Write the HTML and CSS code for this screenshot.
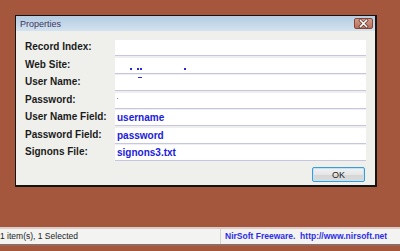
FILE: index.html
```html
<!DOCTYPE html>
<html>
<head>
<meta charset="utf-8">
<link rel="stylesheet" href="styles.css">
</head>
<body>
<div class="desktop">
  <div class="dialog">
    <div class="titlebar">
      <span class="title">Properties</span>
      <span class="close"><svg width="19" height="11" viewBox="0 0 19 11"><path d="M6.5 2.5 L12.5 8.5 M12.5 2.5 L6.5 8.5" stroke="#5a2a20" stroke-width="3" stroke-linecap="square"/><path d="M6.5 2.5 L12.5 8.5 M12.5 2.5 L6.5 8.5" stroke="#ffffff" stroke-width="1.6" stroke-linecap="square"/></svg></span>
    </div>
    <div class="body">
      <div class="grid">
        <div class="label">Record Index:</div><div class="field"></div>
        <div class="label">Web Site:</div><div class="field"><span class="dot d1"></span><span class="dot d2"></span><span class="dot d3"></span><span class="dot d4"></span></div>
        <div class="label">User Name:</div><div class="field"><span class="dash"></span></div>
        <div class="label">Password:</div><div class="field"><span class="tick"></span></div>
        <div class="label">User Name Field:</div><div class="field val">username</div>
        <div class="label">Password Field:</div><div class="field val">password</div>
        <div class="label">Signons File:</div><div class="field val">signons3.txt</div>
      </div>
      <div class="actions"><span class="ok">OK</span></div>
    </div>
  </div>
</div>
<div class="statusbar">
  <div class="panel p1">1 item(s), 1 Selected</div>
  <div class="panel p2">NirSoft Freeware.&nbsp; http://www.nirsoft.net</div>
</div>
</body>
</html>
```
FILE: styles.css
```css
html, body {
  margin: 0;
  padding: 0;
  height: 251px;
  overflow: hidden;
}
body {
  background: #a4573c;
  font-family: "Liberation Sans", Arial, sans-serif;
}
.desktop {
  height: 227px;
  box-sizing: border-box;
  padding: 15px 0 0 15px;
}
.dialog {
  width: 362px;
  height: 172px;
  box-sizing: border-box;
  border: 1px solid #141414;
  border-right-width: 2px;
  border-bottom-width: 2px;
  background: #eff0ec;
  display: flex;
  flex-direction: column;
}
.titlebar {
  height: 15px;
  flex: none;
  background: linear-gradient(#b4cce2, #d3e2ef);
  display: flex;
  align-items: center;
  justify-content: space-between;
  padding: 0 2px 0 4px;
}
.title {
  font-size: 9px;
  color: #43365f;
}
.close {
  width: 19px;
  height: 11px;
  box-sizing: border-box;
  border: 1px solid #8a4634;
  border-radius: 2px;
  background: linear-gradient(#d39a88, #b8705c);
  display: flex;
}
.close svg {
  margin: -1px;
}
.body {
  flex: 1;
  padding: 8px 9px 0 9px;
  display: flex;
  flex-direction: column;
}
.grid {
  display: grid;
  grid-template-columns: 90px 1fr;
  grid-auto-rows: 17.5px;
}
.label {
  font-size: 10px;
  font-weight: bold;
  color: #1b1b1b;
  line-height: 16px;
}
.field {
  height: 17px;
  box-sizing: border-box;
  background: #ffffff;
  border-top: 1px solid #eeeef4;
  border-bottom: 1px solid #c6c6de;
  display: flex;
  align-items: flex-start;
  position: relative;
}
.val {
  font-size: 10px;
  font-weight: bold;
  color: #2020dc;
  line-height: 15px;
  padding-left: 2px;
}
.dot {
  display: block;
  height: 2px;
  background: #2828e0;
  margin-top: 10px;
}
.d1 { width: 2px; margin-left: 15px; }
.d2 { width: 2px; margin-left: 5px; }
.d3 { width: 2px; margin-left: 1px; }
.d4 { width: 2px; margin-left: 42px; }
.dash {
  display: block;
  width: 4px;
  height: 1px;
  background: #2828e0;
  margin: 2px 0 0 23px;
}
.tick {
  display: block;
  width: 1px;
  height: 1px;
  background: #8080c0;
  margin: 5px 0 0 2px;
}
.actions {
  display: flex;
  justify-content: flex-end;
  padding-top: 5.5px;
  padding-right: 1px;
}
.ok {
  width: 53px;
  height: 15px;
  box-sizing: border-box;
  border: 1px solid #3f9ad6;
  border-radius: 2px;
  background: linear-gradient(#f2f2f2 0%, #e6e6e6 50%, #d6d6d6 51%, #dadada 100%);
  box-shadow: inset 0 0 0 1px #bfe3f7;
  font-size: 9px;
  color: #222;
  display: flex;
  align-items: center;
  justify-content: center;
}
.statusbar {
  height: 19px;
  box-sizing: border-box;
  border-top: 2px solid #dccbc6;
  border-bottom: 2px solid #8f6b61;
  background: #f3f3f2;
  display: flex;
}
.panel {
  font-size: 8.5px;
  line-height: 15px;
  white-space: nowrap;
}
.p1 {
  width: 220px;
  color: #222;
  border-right: 1px solid #d4d4d4;
}
.p2 {
  padding-left: 4px;
  font-weight: bold;
  color: #2d2de6;
}
```
